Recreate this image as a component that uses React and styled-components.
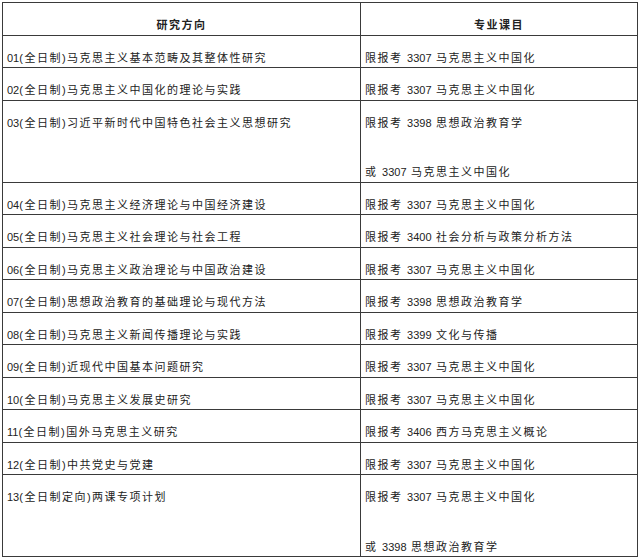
import React from 'react';
import styled, { createGlobalStyle } from 'styled-components';

const GlobalStyle = createGlobalStyle`
    html, body {
        margin: 0;
        padding: 0;
        background: #ffffff;
    }
`;

const Page = styled.div`
    padding: 2px 2px 0 2px;
    width: 639px;
    height: 560px;
    box-sizing: border-box;
    background: #ffffff;
    font-family: "Liberation Sans", "Noto Sans CJK SC", sans-serif;
    font-size: 11px;
    color: #222222;
`;

const Table = styled.table`
    width: 635px;
    border-collapse: collapse;
    table-layout: fixed;
    border: 1px solid #2a2a2a;
`;

const Cell = styled.td`
    box-sizing: border-box;
    border: 1px solid #3a3a3a;
    padding: 0 4px;
    vertical-align: top;
    width: ${props => props.$width}px;
    text-align: ${props => (props.$center ? 'center' : 'left')};
    font-weight: ${props => (props.$head ? 700 : 400)};
`;

const Line = styled.p`
    margin: 14px 0 0 0;
    line-height: 17.5px;
    height: 17.5px;
    white-space: nowrap;
    letter-spacing: 1.5px;

    & + & {
        margin-top: 32px;
    }
`;

const Num = styled.span`
    letter-spacing: 0;
`;

const rows = [
    ['01(全日制)马克思主义基本范畴及其整体性研究', ['限报考 3307 马克思主义中国化']],
    ['02(全日制)马克思主义中国化的理论与实践', ['限报考 3307 马克思主义中国化']],
    ['03(全日制)习近平新时代中国特色社会主义思想研究', ['限报考 3398 思想政治教育学', '或 3307 马克思主义中国化']],
    ['04(全日制)马克思主义经济理论与中国经济建设', ['限报考 3307 马克思主义中国化']],
    ['05(全日制)马克思主义社会理论与社会工程', ['限报考 3400 社会分析与政策分析方法']],
    ['06(全日制)马克思主义政治理论与中国政治建设', ['限报考 3307 马克思主义中国化']],
    ['07(全日制)思想政治教育的基础理论与现代方法', ['限报考 3398 思想政治教育学']],
    ['08(全日制)马克思主义新闻传播理论与实践', ['限报考 3399 文化与传播']],
    ['09(全日制)近现代中国基本问题研究', ['限报考 3307 马克思主义中国化']],
    ['10(全日制)马克思主义发展史研究', ['限报考 3307 马克思主义中国化']],
    ['11(全日制)国外马克思主义研究', ['限报考 3406 西方马克思主义概论']],
    ['12(全日制)中共党史与党建', ['限报考 3307 马克思主义中国化']],
    ['13(全日制定向)两课专项计划', ['限报考 3307 马克思主义中国化', '或 3398 思想政治教育学']],
];

function withNumbers(text) {
    return text.split(/(\d+)/).map((part, i) =>
        /^\d+$/.test(part) ? <Num key={i}>{part}</Num> : part
    );
}

function App() {
    return (
        <Page>
            <GlobalStyle />
            <Table>
                <tbody>
                    <tr>
                        <Cell $width={358} $center $head><Line>研究方向</Line></Cell>
                        <Cell $width={277} $center $head><Line>专业课目</Line></Cell>
                    </tr>
                    {rows.map(([direction, subjects]) => (
                        <tr key={direction}>
                            <Cell $width={358}><Line>{withNumbers(direction)}</Line></Cell>
                            <Cell $width={277}>
                                {subjects.map(s => <Line key={s}>{withNumbers(s)}</Line>)}
                            </Cell>
                        </tr>
                    ))}
                </tbody>
            </Table>
        </Page>
    );
}

export default App;
